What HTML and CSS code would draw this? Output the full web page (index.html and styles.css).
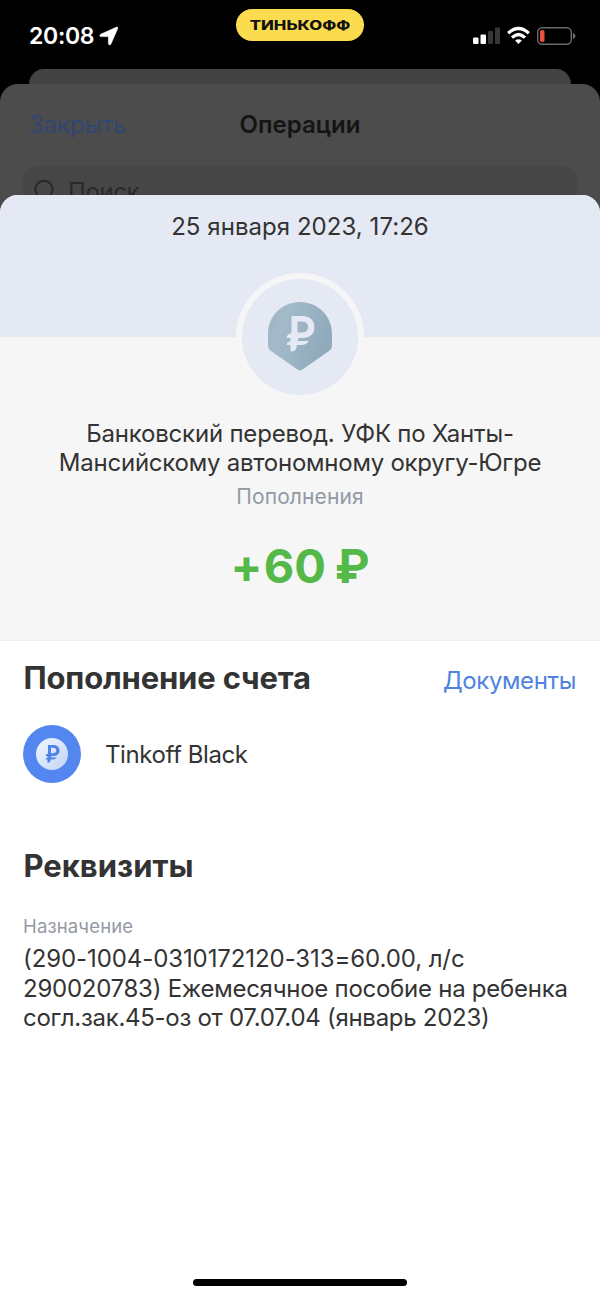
FILE: index.html
```html
<!DOCTYPE html>
<html lang="ru">
<head>
<meta charset="utf-8">
<title>Операция</title>
<link rel="stylesheet" href="styles.css">
</head>
<body>
<header class="status">
  <div class="clock"><span class="time">20:08</span>
    <svg class="loc" width="20" height="20" viewBox="0 0 20 20"><path d="M17.300 1.200 1.600 8.300c-1.300.7-1 2.300.5 2.300h6.700c.4 0 .6.2.6.6v6.200c0 1.700 1.900 2 2.600.5L18.700 2.500c.4-1-.4-1.700-1.400-1.300z" fill="#fff" stroke="#fff" stroke-width=".6"/></svg>
  </div>
  <div class="pill"><span class="pill-text">ТИНЬКОФФ</span></div>
  <svg class="indicators" width="104" height="20" viewBox="0 0 104 20">
    <rect x="0" y="11.500" width="5.500" height="6.500" rx="1" fill="#fff"/>
    <rect x="7.500" y="8.500" width="5.500" height="9.500" rx="1" fill="#fff"/>
    <rect x="15" y="5" width="5" height="13" rx="1" fill="#373737"/>
    <rect x="22" y="1.500" width="5" height="16.500" rx="1" fill="#373737"/>
    <g fill="none" stroke="#fff" stroke-width="3.200"><path d="M35.200 7.200Q45.500-2.200 55.800 7.200"/><path d="M39 11.600Q45.500 5.400 52 11.600"/></g>
    <path d="M42.100 14.500Q45.500 12 48.900 14.500L45.500 18z" fill="#fff"/>
    <rect x="64.700" y="1.700" width="33.600" height="16.600" rx="4.500" fill="none" stroke="#6b6b6b" stroke-width="1.400"/>
    <rect x="67" y="4" width="4.500" height="12" rx="1.800" fill="#e6513f"/>
    <path d="M100 7q2.500 1 2.500 3t-2.500 3z" fill="#6b6b6b"/>
  </svg>
</header>
<div class="sheet-far"></div>
<section class="sheet-mid">
  <nav class="nav"><span class="close t">Закрыть</span><span class="nav-title t">Операции</span><span></span></nav>
  <div class="search">
    <svg width="24" height="26" viewBox="0 0 24 26" fill="none" stroke="#272727" stroke-width="2"><circle cx="10" cy="11.500" r="8.700"/><path d="m16 18 6 6.500"/></svg>
    <span class="search-text t">Поиск</span>
  </div>
</section>
<main class="sheet">
  <div class="band"><span class="date t">25 января 2023, 17:26</span></div>
  <div class="summary">
    <div class="logo">
      <svg width="64" height="69" viewBox="0 0 64 69">
        <defs><linearGradient id="pin" x1="0" y1="0" x2="1" y2=".35"><stop offset="0" stop-color="#9fb4c2"/><stop offset=".3" stop-color="#a3bac9"/><stop offset="1" stop-color="#90aabb"/></linearGradient>
        <symbol id="rub" viewBox="0 0 28 36"><path fill-rule="evenodd" d="M5 0H16C24 0 28 5 28 11.500S23 22 16 22H12L11 25H22.500Q20 29 15 29H10.500L9.500 33Q8 36 4 35.500V29H0Q.3 26 4 25V22H0Q.3 18 5 17zM11 5.500V16.500H15Q21.500 16.500 21.500 11T15 5.500z"/></symbol></defs>
        <path d="M0 32C0 14 14 0 32 0s32 14 32 32v12q0 3-3 5L34.500 67.500Q32 69.500 29.500 67.500L3 49Q0 47 0 44z" fill="url(#pin)"/>
        <use href="#rub" x="18.500" y="14" width="28" height="36" fill="#e5e9f3"/>
      </svg>
    </div>
    <h1 class="payer"><span class="p1 t">Банковский перевод. УФК по Ханты-</span><span class="p2 t">Мансийскому автономному округу-Югре</span></h1>
    <span class="category t">Пополнения</span>
    <span class="amount t"><span class="plus">+</span>60 ₽</span>
  </div>
  <section class="account">
    <div class="account-head"><h2 class="heading h-acc t">Пополнение счета</h2><a class="docs t">Документы</a></div>
    <div class="card">
      <div class="card-icon">
        <svg width="32" height="32" viewBox="0 0 32 32"><defs><linearGradient id="coin" x1="0" y1="0" x2="1" y2="1"><stop offset="0" stop-color="#f3f7fd"/><stop offset="1" stop-color="#bfd4f8"/></linearGradient></defs><circle cx="16" cy="16" r="16" fill="url(#coin)"/><use href="#rub" x="9" y="7" width="15" height="18" fill="#5084e8"/></svg>
      </div>
      <span class="card-name t">Tinkoff Black</span>
    </div>
  </section>
  <section class="details">
    <h2 class="heading h-req t">Реквизиты</h2>
    <span class="label t">Назначение</span>
    <p class="purpose"><span class="d1 t">(290-1004-0310172120-313=60.00, л/с</span><span class="d2 t">290020783) Ежемесячное пособие на ребенка</span><span class="d3 t">согл.зак.45-оз от 07.07.04 (январь 2023)</span></p>
  </section>
  <div class="home"></div>
</main>
</body>
</html>
```
FILE: styles.css
```css
* { box-sizing: border-box; }
body { margin: 0; width: 600px; height: 1297px; overflow: hidden; background: #000; color: #333; font-family: Inter, "Liberation Sans", sans-serif; display: flex; flex-direction: column; }
h1, h2, p { margin: 0; font-weight: 400; }
.t { white-space: nowrap; }
.status { height: 69px; flex: none; display: grid; grid-template-columns: 236px 128px 236px; align-items: start; }
.clock { display: flex; align-items: center; gap: 5px; padding: 22px 0 0 29px; height: 50px; color: #fff; }
.time { font-size: 23px; font-weight: 600; line-height: 28px; letter-spacing: -0.3px; }
.pill { height: 32px; margin-top: 9px; border-radius: 16px; background: #fcdc4f; display: flex; align-items: center; justify-content: center; }
.pill-text { color: #111; font-size: 13px; font-weight: 800; line-height: 16px; transform: scaleX(1.29); white-space: nowrap; }
.indicators { justify-self: start; margin: 26px 0 0 109px; }
.sheet-far { flex: none; height: 15px; margin: 0 29px; background: #434343; border-radius: 15px 15px 0 0; }
.sheet-mid { flex: none; height: 131px; margin-bottom: -20px; background: #4c4c4c; border-radius: 18px 18px 0 0; padding: 0 23px; }
.nav { height: 82px; padding: 0 6px; display: grid; grid-template-columns: 1fr auto 1fr; align-items: center; line-height: 30px; font-size: 24px; }
.close { color: #324673; letter-spacing: -0.2px; }
.nav-title { color: #141414; font-weight: 600; }
.search { height: 49px; border-radius: 14px 14px 0 0; background: #464646; padding: 12px 11px; display: flex; gap: 10px; align-items: flex-start; }
.search-text { color: #2a2a2a; font-size: 24px; line-height: 28px; letter-spacing: -0.4px; }
.sheet { position: relative; flex: 1; background: #fff; border-radius: 18px 18px 0 0; overflow: hidden; display: flex; flex-direction: column; }
.band { flex: none; height: 142px; background: #e4e9f3; display: flex; justify-content: center; padding-top: 17px; }
.date { font-size: 24px; line-height: 30px; letter-spacing: 0.05px; }
.summary { flex: none; height: 304px; background: #f6f6f6; border-bottom: 1px solid #efefef; display: flex; flex-direction: column; align-items: center; }
.logo { flex: none; width: 128px; height: 128px; margin-top: -64px; border-radius: 50%; background: #e5e9f3; border: 6px solid #f6f6f6; display: flex; justify-content: center; padding-top: 23px; }
.payer { margin-top: 18px; display: flex; flex-direction: column; align-items: center; font-size: 24px; line-height: 29px; }
.p1 { letter-spacing: -0.2px; }
.p2 { letter-spacing: -0.24px; }
.category { margin-top: 7px; color: #9299a2; font-size: 21px; line-height: 26px; letter-spacing: 0.1px; }
.amount { margin-top: 28px; color: #54b948; font-size: 47px; line-height: 56px; font-weight: 700; word-spacing: -2.500px; }
.plus { margin-right: 1.500px; }
.account { padding: 17px 24px 0 23px; height: 203px; flex: none; }
.account-head { display: flex; justify-content: space-between; align-items: center; }
.heading { font-size: 31px; line-height: 40px; font-weight: 700; padding-left: 0.500px; }
.h-acc { letter-spacing: -0.17px; }
.docs { color: #4f83df; font-size: 24px; line-height: 30px; padding-top: 6px; letter-spacing: -0.38px; }
.card { margin-top: 27px; display: flex; align-items: center; gap: 24px; }
.card-icon { width: 58px; height: 58px; border-radius: 50%; background: #5387ef; display: flex; align-items: center; justify-content: center; }
.card-name { font-size: 24px; line-height: 30px; padding-top: 2px; letter-spacing: -0.42px; }
.details { flex: 1; padding: 2px 23px 0; display: flex; flex-direction: column; align-items: flex-start; }
.label { margin-top: 28px; color: #9299a2; font-size: 18.500px; line-height: 24px; letter-spacing: 0.15px; }
.purpose { margin-top: 6px; font-size: 24px; line-height: 29.500px; display: flex; flex-direction: column; align-items: flex-start; }
.d1 { letter-spacing: -0.09px; }
.d2 { letter-spacing: -0.26px; }
.d3 { letter-spacing: -0.28px; }
.home { align-self: center; flex: none; width: 214px; height: 7px; margin-bottom: 11px; border-radius: 4px; background: #000; }
```
